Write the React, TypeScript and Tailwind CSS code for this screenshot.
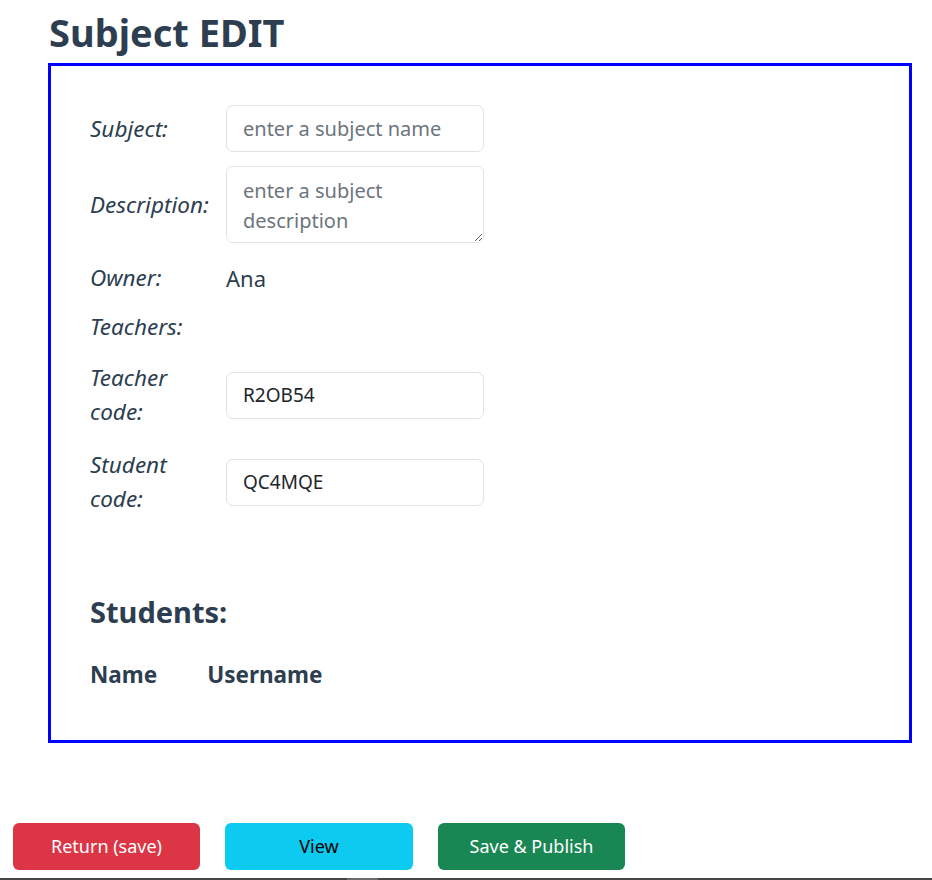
import React from 'react';

const font = { fontFamily: '"Segoe UI", "Noto Sans", sans-serif' };

function Field({ label, h, children }: { label: string; h: string; children?: React.ReactNode }) {
  return (
    <div className={`flex items-center ${h}`}>
      <div className="w-[136px] pr-3 text-[22.5px] leading-[34px] italic text-[#2c3e50]">{label}</div>
      <div className="flex-1">{children}</div>
    </div>
  );
}

const inputCls =
  'block w-[258px] h-[47px] rounded-[7px] border border-[#dee2e6] bg-white px-4 text-[19px] text-[#212529] placeholder:text-[#6c757d] placeholder:text-[20px] outline-none';

export default function App() {
  return (
    <div className="min-h-[880px] bg-white text-[#2c3e50]" style={font}>
      <h1 className="pl-[49px] pt-[7px] text-[38px] font-bold leading-[50px] text-[#2c3e50]">Subject EDIT</h1>

      <div className="mt-[6px] ml-[48px] w-[864px] h-[680px] border-[3px] border-[#0000ff] px-[39px] pt-[32px]">
        <Field label="Subject:" h="h-[61px]">
          <input className={inputCls} placeholder="enter a subject name" />
        </Field>
        <Field label="Description:" h="h-[91px]">
          <textarea
            className="block w-[258px] h-[77px] rounded-[7px] border border-[#dee2e6] bg-white px-4 py-[9px] text-[20px] leading-[30px] text-[#212529] placeholder:text-[#6c757d] outline-none"
            placeholder="enter a subject description"
          />
        </Field>
        <Field label="Owner:" h="h-[56px]">
          <span className="text-[22px] text-[#2c3e50]">Ana</span>
        </Field>
        <Field label="Teachers:" h="h-[42px]" />
        <Field label="Teacher code:" h="h-[94px]">
          <input className={inputCls} defaultValue="R2OB54" />
        </Field>
        <Field label="Student code:" h="h-[80px]">
          <input className={inputCls} defaultValue="QC4MQE" />
        </Field>

        <h3 className="mt-[72px] text-[29px] font-bold leading-[36px]">Students:</h3>
        <div className="mt-[28px] flex gap-[50px] text-[22.5px] font-bold">
          <span>Name</span>
          <span>Username</span>
        </div>
      </div>

      <div className="mt-[80px] flex gap-[25px] pl-[13px]">
        <button className="h-[47px] w-[187px] rounded-[6px] bg-[#dc3545] text-[18px] text-white">Return (save)</button>
        <button className="h-[47px] w-[188px] rounded-[6px] bg-[#0dcaf0] text-[18px] text-black">View</button>
        <button className="h-[47px] w-[187px] rounded-[6px] bg-[#198754] text-[18px] text-white">Save &amp; Publish</button>
      </div>

      <div className="mt-[8px] flex h-[2px] bg-[#474747]">
        <div className="ml-[347px] w-[31px] bg-[#6b6b6b]" />
      </div>
    </div>
  );
}
